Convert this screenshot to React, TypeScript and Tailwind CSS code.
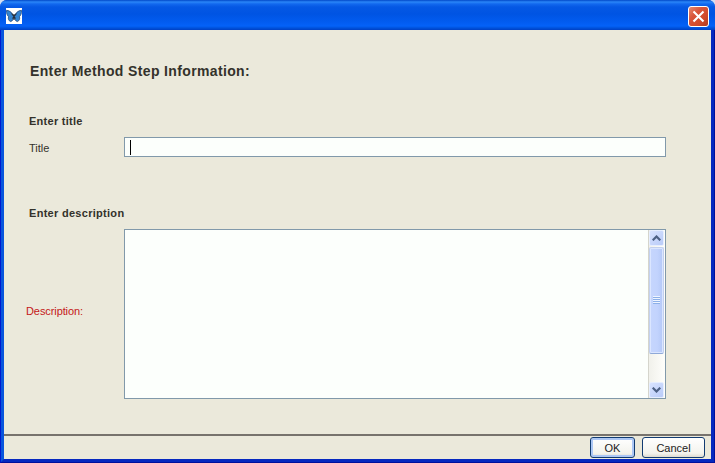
import type { ReactNode } from "react";

function ButterflyIcon() {
  return (
    <svg width="16" height="16" viewBox="0 0 16 16" className="block shrink-0 bg-white">
      <path d="M7.700 8.500C6.500 5 4 2.500.5 2.300c-.2 3 .8 5.400 2.100 6.400-.8 1.800 0 4.200 2 4.900C6.500 13.300 7.600 11 7.700 8.500z" fill="#3384d2" stroke="#24497e" strokeWidth=".8" />
      <path d="M8.300 8.500C9.500 5 12 2.500 15.500 2.300c.2 3-.8 5.400-2.100 6.400.8 1.800 0 4.200-2 4.900-1.900-.3-3-2.600-3.100-5.100z" fill="#3384d2" stroke="#24497e" strokeWidth=".8" />
      <path d="M5.500 5.500l2.500 3 2.500-3M8 8.500l-1.500 2M8 8.500l1.500 2M8 6v6" fill="none" stroke="#29303c" strokeWidth="1.100" />
    </svg>
  );
}

function TitleBar() {
  return (
    <header className="flex h-[30px] shrink-0 items-start justify-between bg-[linear-gradient(180deg,#0148c8_0px,#2a86f8_2px,#1268ee_4px,#0558e4_7px,#0054e3_14px,#025cf0_22px,#0462f8_26px,#0052dc_28px,#0040c4_30px)] pr-[6px] pl-[6px]">
      <div className="pt-2"><ButterflyIcon /></div>
      <button aria-label="Close" className="mt-[6px] flex h-[21px] w-[21px] items-center justify-center rounded-[3px] border border-white bg-[linear-gradient(135deg,#e58a70_0%,#d9553a_35%,#d04a2a_70%,#b03a20_100%)]">
        <svg width="13" height="13" viewBox="0 0 13 13">
          <path d="M1.500 1.500l10 10M11.500 1.500l-10 10" stroke="#fff" strokeWidth="2.100" />
        </svg>
      </button>
    </header>
  );
}

function ScrollArrow({ down = false }: { down?: boolean }) {
  return (
    <div className="flex h-[16px] w-[15px] shrink-0 items-center justify-center rounded-[2px] border border-[#e6eeff] bg-[linear-gradient(135deg,#d8e3ff,#b9cbf8)]">
      <svg width="9" height="6" viewBox="0 0 9 6" className={down ? "rotate-180" : ""}>
        <path d="M.7 5.300L4.500 1.500l3.800 3.800" fill="none" stroke="#4d6185" strokeWidth="2.200" />
      </svg>
    </div>
  );
}

function ScrollBar() {
  return (
    <div className="flex w-[17px] shrink-0 flex-col border-l border-[#d5d5cc] bg-[linear-gradient(90deg,#f1f1eb,#fefefb)] pr-px">
      <ScrollArrow />
      <div className="mt-px flex h-[107px] w-[15px] shrink-0 flex-col items-center justify-center gap-px rounded-[2px] border border-[#c3d0ee] border-b-[#8fa9d8] bg-[linear-gradient(90deg,#c6d6fd,#c2d3fd_55%,#b4c8f6)] shadow-[inset_0_0_0_1px_#dbe6ff]">
        {[0, 1, 2, 3].map((n) => (
          <div key={n} className="h-px w-[7px] bg-[#8cb0e8] shadow-[0_-1px_0_#eef4ff]" />
        ))}
      </div>
      <div className="mt-auto"><ScrollArrow down /></div>
    </div>
  );
}

function DialogButton({ children, className }: { children: ReactNode; className: string }) {
  return (
    <button className={`flex h-[21px] items-center justify-center rounded-[3px] border border-[#123c72] bg-[linear-gradient(180deg,#ffffff,#f3f3ed_80%,#dedbd0)] text-[11px] leading-none text-[#222] ${className}`}>
      <span className="pt-px">{children}</span>
    </button>
  );
}

export default function App() {
  return (
    <div className="h-[463px] w-[715px] bg-[#d5dff2] font-['Liberation_Sans',Arial,sans-serif] text-[#33322b]">
      <main className="flex h-full flex-col overflow-hidden rounded-t-[7px] bg-[#0046d5]">
        <TitleBar />
        <div className="flex min-h-0 flex-1 border-r border-b border-l border-r-[#00109c] border-b-[#00109c] border-l-[#0019cf]">
          <div className="flex flex-1 flex-col border-r-[3px] border-b-[3px] border-l-[3px] border-r-[#0628bf] border-b-[#0628bf] border-l-[#0855dd] bg-[#ebe9db]">
            <section className="flex h-[404px] flex-col pl-[25px]">
              <h1 className="mt-[32px] ml-px h-[18px] text-[14px] leading-[18px] font-bold tracking-[0.36px] whitespace-nowrap">Enter Method Step Information:</h1>
              <h2 className="mt-[34px] h-[14px] text-[11px] leading-[14px] font-bold tracking-[0.27px]">Enter title</h2>
              <label className="mt-[9px] flex h-[20px] items-center">
                <span className="w-[95px] shrink-0 pt-[2px] text-[11px] leading-[14px]">Title</span>
                <span className="flex h-[20px] w-[542px] items-center border border-[#8199aa] bg-[#fcfffc] pl-[5px]">
                  <span className="h-[15px] w-px bg-black" />
                </span>
              </label>
              <h2 className="mt-[49px] h-[14px] text-[11px] leading-[14px] font-bold tracking-[0.29px]">Enter description</h2>
              <div className="mt-[9px] -ml-[3px] flex h-[170px] items-center">
                <span className="w-[98px] shrink-0 pb-[6px] text-[11px] leading-[14px] tracking-[-0.09px] text-[#c41818]">Description:</span>
                <div className="flex h-[170px] w-[542px] justify-end border border-[#8199aa] bg-[#fcfffc]">
                  <ScrollBar />
                </div>
              </div>
            </section>
            <footer className="flex flex-1 items-start justify-end gap-[7px] border-t-2 border-[#77736d] pt-px pr-[6px]">
              <DialogButton className="w-[45px] shadow-[inset_0_0_0_2px_#acc7f5]">OK</DialogButton>
              <DialogButton className="w-[63px]">Cancel</DialogButton>
            </footer>
          </div>
        </div>
      </main>
    </div>
  );
}
